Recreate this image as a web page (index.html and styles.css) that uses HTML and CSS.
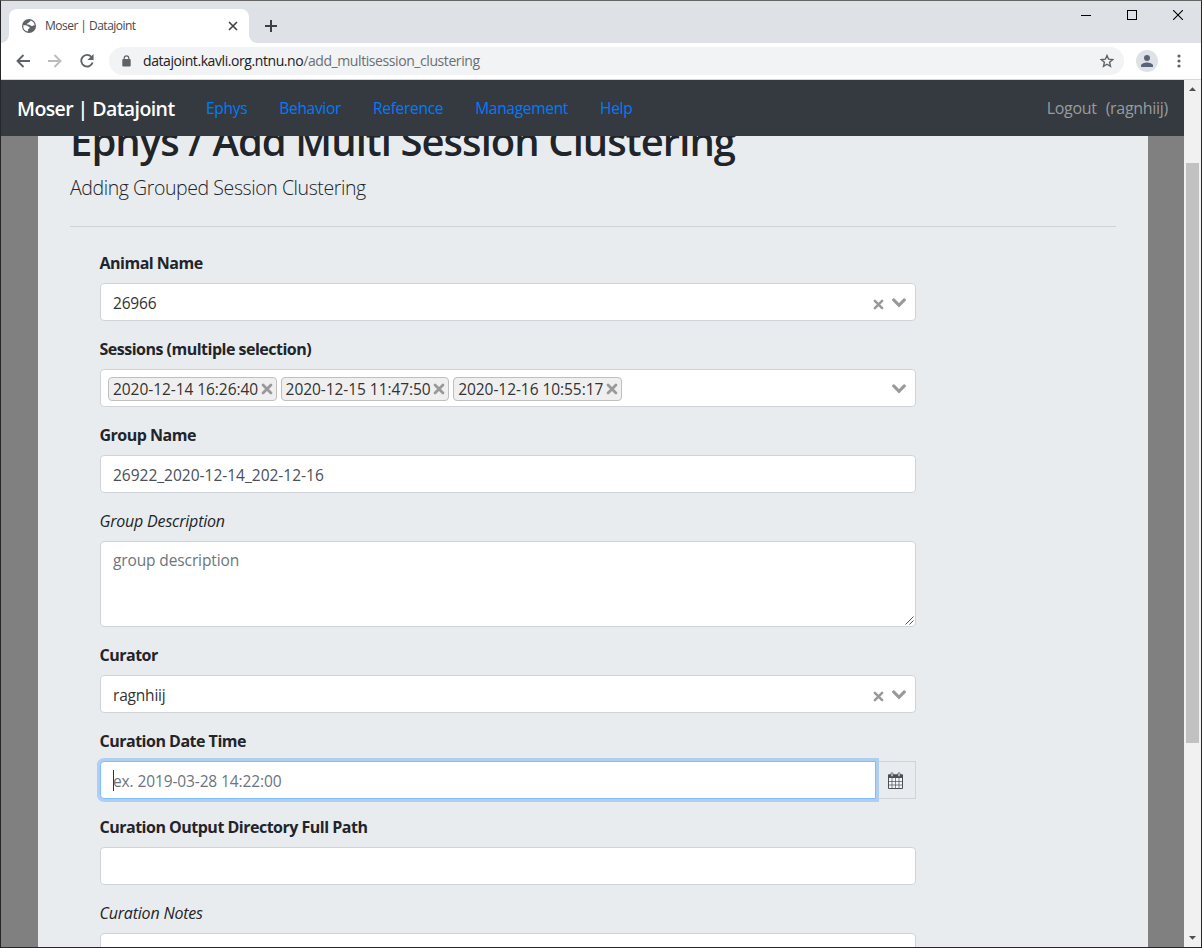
FILE: index.html
```html
<!DOCTYPE html>
<html lang="en">
<head>
<meta charset="utf-8">
<title>Moser | Datajoint</title>
<link rel="stylesheet" href="styles.css">
</head>
<body>
<svg class="defs" width="0" height="0">
  <symbol id="cross" viewBox="0 0 10 10"><path d="M1.7 1.7 8.3 8.3M8.3 1.7 1.7 8.3" stroke="#999" stroke-width="2.3" stroke-linecap="round"/></symbol>
  <symbol id="chevron" viewBox="0 0 14 10"><path d="M1.7 1.9 7 7.3 12.3 1.9" fill="none" stroke="#999" stroke-width="3.1" stroke-linecap="round"/></symbol>
</svg>
<div class="window">
  <div class="tabstrip">
    <div class="tab">
      <svg class="globe" width="14" height="14" viewBox="0 0 14 14"><circle cx="7" cy="7" r="7" fill="#5f6368"/><path d="M1.300 6.300c1.700-.2 4-.1 4.500.9.300.7 2 .2 1.900 1.500-.1 1-1.700 1-1.700 2.200l-.1 1.700A5.900 5.900 0 0 1 1.300 6.300ZM8.600 1.500c.3 1.300-1.400 1-1.800 2-.4.900-2 .6-1.700 1.600.3.800 1.900.4 2.800 1 .9.600 1.500 1.300 2.500.9.900-.4 1.300-1 2.300-.6A5.800 5.800 0 0 0 8.600 1.500Z" fill="#fff"/></svg>
      <span class="tab-title">Moser | Datajoint</span>
      <svg class="tab-close" width="10" height="10" viewBox="0 0 10 10"><path d="M1 1 9 9M9 1 1 9" stroke="#3c4043" stroke-width="1.6"/></svg>
    </div>
    <svg class="newtab" width="12" height="12" viewBox="0 0 12 12"><path d="M6 0V12M0 6H12" stroke="#3c4043" stroke-width="2"/></svg>
    <div class="controls">
      <svg width="10" height="10"><path d="M0 5.500H10" stroke="#000"/></svg>
      <svg width="10" height="10"><rect x=".5" y=".5" width="9" height="9" fill="none" stroke="#000"/></svg>
      <svg width="10" height="10"><path d="M0 0 10 10M10 0 0 10" stroke="#000" stroke-width="1.100"/></svg>
    </div>
  </div>
  <div class="toolbar">
    <svg width="14" height="14" viewBox="0 0 14 14"><path d="M14 7H1.500M7.500 1 1.500 7l6 6" fill="none" stroke="#5f6368" stroke-width="1.900"/></svg>
    <svg width="14" height="14" viewBox="0 0 14 14"><path d="M0 7H12.500M6.500 1l6 6-6 6" fill="none" stroke="#babcbe" stroke-width="1.900"/></svg>
    <svg width="14" height="14" viewBox="0 0 15 15"><path d="M12.300 3.200A6.200 6.200 0 1 0 13.500 9" fill="none" stroke="#5f6368" stroke-width="2"/><path d="M14.500 0V6.500H8Z" fill="#5f6368"/></svg>
    <div class="omnibox">
      <svg class="lock" width="9" height="12" viewBox="0 0 9 12"><path d="M2.200 5V3.200a2.300 2.300 0 0 1 4.600 0V5" fill="none" stroke="#5f6368" stroke-width="1.200"/><rect x=".3" y="4" width="8.400" height="7.500" rx="1" fill="#5f6368"/></svg>
      <span class="url"><span class="domain">datajoint.kavli.org.ntnu.no</span>/add_multisession_clustering</span>
      <svg class="star" width="14" height="14" viewBox="0 0 14 14"><path d="M7 1.500 8.600 5.200 12.700 5.600 9.600 8.300 10.500 12.300 7 10.200 3.500 12.300 4.400 8.300 1.300 5.600 5.400 5.200Z" fill="none" stroke="#5f6368" stroke-width="1.400"/></svg>
    </div>
    <svg class="avatar" width="22" height="22" viewBox="0 0 22 22"><circle cx="11" cy="11" r="11" fill="#dee1e6"/><circle cx="11" cy="8" r="3" fill="#5a6478"/><path d="M5 17v-1.500C5 13.400 9 12.500 11 12.500s6 .9 6 3V17Z" fill="#5a6478"/></svg>
    <svg class="dots" width="4" height="14" viewBox="0 0 4 14"><g fill="#5f6368"><circle cx="2" cy="2" r="1.600"/><circle cx="2" cy="7" r="1.600"/><circle cx="2" cy="12" r="1.600"/></g></svg>
  </div>
  <div class="viewport">
    <div class="page">
      <nav class="navbar">
        <span class="brand">Moser | Datajoint</span>
        <a class="link">Ephys</a><a class="link">Behavior</a><a class="link">Reference</a><a class="link">Management</a><a class="link">Help</a>
        <span class="account"><span>Logout</span><span>(ragnhiij)</span></span>
      </nav>
      <main class="canvas">
        <section class="jumbotron">
          <h1 class="heading">Ephys / Add Multi Session Clustering</h1>
          <p class="lead">Adding Grouped Session Clustering</p>
          <form class="form">
            <div class="group">
              <label class="label">Animal Name</label>
              <div class="control"><span class="value">26966</span><svg class="clear" width="11" height="11"><use href="#cross"/></svg><svg class="arrow" width="14" height="10"><use href="#chevron"/></svg></div>
            </div>
            <div class="group">
              <label class="label">Sessions (multiple selection)</label>
              <div class="control multi">
                <span class="tag">2020-12-14 16:26:40<svg width="12" height="12"><use href="#cross"/></svg></span>
                <span class="tag">2020-12-15 11:47:50<svg width="12" height="12"><use href="#cross"/></svg></span>
                <span class="tag">2020-12-16 10:55:17<svg width="12" height="12"><use href="#cross"/></svg></span>
                <svg class="arrow" width="14" height="10"><use href="#chevron"/></svg>
              </div>
            </div>
            <div class="group">
              <label class="label">Group Name</label>
              <div class="control"><span class="value typed">26922_2020-12-14_202-12-16</span></div>
            </div>
            <div class="group">
              <label class="label optional">Group Description</label>
              <div class="control area"><span class="value placeholder">group description</span><svg class="grip" width="9" height="9"><path d="M.5 8.500 8.500.5M4.500 8.500 8.500 4.500" stroke="#555" stroke-width="1"/></svg></div>
            </div>
            <div class="group">
              <label class="label">Curator</label>
              <div class="control"><span class="value name">ragnhiij</span><svg class="clear" width="11" height="11"><use href="#cross"/></svg><svg class="arrow" width="14" height="10"><use href="#chevron"/></svg></div>
            </div>
            <div class="group">
              <label class="label">Curation Date Time</label>
              <div class="input-group">
                <div class="control focused"><span class="caret"></span><span class="value placeholder">ex. 2019-03-28 14:22:00</span></div>
                <div class="addon"><svg width="15" height="17" viewBox="0 0 15 17"><path d="M.5 3H14.500V16.500H.5Z" fill="#f4f6f8" stroke="#495057"/><path d="M0 2.500h15V6H0Z" fill="#495057"/><path d="M4 6V16M7.500 6V16M11 6V16M1 9.500H14M1 13H14" stroke="#495057" stroke-width=".7"/><rect x="3" y=".7" width="2" height="4" rx="1" fill="#e9ecef" stroke="#495057" stroke-width=".8"/><rect x="10" y=".7" width="2" height="4" rx="1" fill="#e9ecef" stroke="#495057" stroke-width=".8"/></svg></div>
              </div>
            </div>
            <div class="group">
              <label class="label">Curation Output Directory Full Path</label>
              <div class="control"></div>
            </div>
            <div class="group">
              <label class="label optional">Curation Notes</label>
              <div class="control area"></div>
            </div>
          </form>
        </section>
      </main>
    </div>
    <div class="scrollbar">
      <svg width="7" height="4"><path d="M0 4 3.500 .2 7 4Z" fill="#505050"/></svg>
      <div class="thumb"></div>
      <svg class="down" width="7" height="4"><path d="M0 0 3.500 3.800 7 0Z" fill="#505050"/></svg>
    </div>
  </div>
</div>
</body>
</html>
```
FILE: styles.css
```css
* { box-sizing: border-box; }
body { margin: 0; font: 16px/24px "Open Sans", sans-serif; color: #212529; overflow: hidden; }
svg { display: block; flex: none; }
.defs { position: absolute; }
.window { height: 948px; display: flex; flex-direction: column; border: 1px solid #24262a; border-top-color: #666; }
.tabstrip { height: 42px; flex: none; display: flex; background: #dee1e6; padding: 8px 18px 0 8px; }
.tab { position: relative; width: 240px; height: 34px; background: #fff; border-radius: 8px 8px 0 0; display: flex; align-items: center; padding: 0 11px 0 13px; }
.tab::before, .tab::after { content: ""; position: absolute; bottom: 0; width: 8px; height: 8px; }
.tab::before { left: -8px; background: radial-gradient(circle at 0 0, #dee1e6 7.5px, #fff 8px); }
.tab::after { right: -8px; background: radial-gradient(circle at 100% 0, #dee1e6 7.5px, #fff 8px); }
.tab-title { margin-left: 9px; flex: 1; font-size: 12px; letter-spacing: -0.52px; color: #45494d; white-space: nowrap; }
.newtab { margin: 11px 0 0 16px; }
.controls { margin-left: auto; display: flex; gap: 36px; padding-top: 1px; }
.toolbar { height: 37px; flex: none; display: flex; align-items: center; background: #fff; border-bottom: 1px solid #d5d7da; padding: 0 20px 0 15px; }
.toolbar > svg + svg { margin-left: 18px; }
.toolbar > .dots { margin-left: 19px; }
.omnibox { flex: 1; height: 28px; margin: 0 12px 0 15px; border-radius: 14px; background: #f1f3f4; display: flex; align-items: center; padding: 0 10px 0 13px; }
.url { margin-left: 12px; font-size: 14px; letter-spacing: -0.42px; color: #6b6f73; white-space: nowrap; }
.domain { color: #202124; }
.star { margin-left: auto; }
.viewport { flex: 1; min-height: 0; display: flex; }
.page { flex: 1; min-width: 0; display: flex; flex-direction: column; overflow: hidden; }
.navbar { height: 56px; flex: none; background: #343a40; display: flex; align-items: center; gap: 32px; padding: 0 16px; white-space: nowrap; }
.brand { width: 157px; font-size: 19.5px; font-weight: 600; letter-spacing: -0.58px; color: #fff; padding-top: 1px; }
.link { color: #007bff; font-size: 15.5px; letter-spacing: -0.3px; }
.account { margin-left: auto; display: flex; gap: 9px; color: #999c9f; letter-spacing: -0.3px; }
.canvas { flex: 1; min-height: 0; overflow: hidden; background: #808080; padding: 0 36px 0 37px; }
.jumbotron { display: flow-root; height: 100%; background: #e9ecef; padding: 0 32px; overflow: hidden; }
.heading { margin: -19px 0 8px; font-size: 40px; line-height: 48px; font-weight: 600; letter-spacing: -0.94px; white-space: nowrap; }
.lead { margin: 0; height: 54px; font-size: 19.5px; line-height: 30px; font-weight: 300; letter-spacing: -0.42px; border-bottom: 1px solid #ced1d5; }
.form { width: 816px; margin: 24px 0 0 30px; }
.group { margin-bottom: 16px; }
.label { display: block; margin: 0 0 8px -0.5px; font-weight: 700; letter-spacing: -0.5px; white-space: nowrap; }
.optional { font-weight: 400; font-style: italic; letter-spacing: -0.2px; }
.control { height: 38px; background: #fff; border: 1px solid #ced4da; border-radius: 4px; display: flex; align-items: center; padding: 2px 9px 0 12px; white-space: nowrap; }
.value { font-size: 15.5px; letter-spacing: -0.2px; color: #333; }
.typed { letter-spacing: 0; color: #495057; }
.placeholder { letter-spacing: -0.12px; color: #6c757d; }
.clear { margin: 3px 8px 0 auto; }
.multi { padding: 2px 9px 0 7px; gap: 4px; }
.tag { display: flex; align-items: center; justify-content: space-between; width: 168.6px; height: 24px; border: 1px solid #bfbfbf; border-radius: 4px; background: #efefef; padding: 0 3px 0 4px; color: #333; font-size: 15.5px; letter-spacing: -0.06px; }
.multi .arrow { margin-left: auto; }
.area { position: relative; height: 86px; align-items: flex-start; padding-top: 6px; }
.grip { position: absolute; right: 1px; bottom: 1px; }
.input-group { display: flex; }
.focused { position: relative; width: 776px; border-color: #80bdff; border-radius: 4px 0 0 4px; box-shadow: 0 0 0 3px #aecff2; }
.caret { width: 1px; height: 21px; margin: -2px -1px 0 0; background: #333; }
.addon { flex: 1; border: 1px solid #ced4da; border-left: 0; display: flex; align-items: center; justify-content: center; }
.scrollbar { width: 17px; flex: none; background: #f1f1f1; display: flex; flex-direction: column; align-items: center; padding: 7px 0 7px; }
.thumb { width: 13px; height: 580px; margin-top: 72px; background: #c1c1c1; }
.down { margin-top: auto; }
```
